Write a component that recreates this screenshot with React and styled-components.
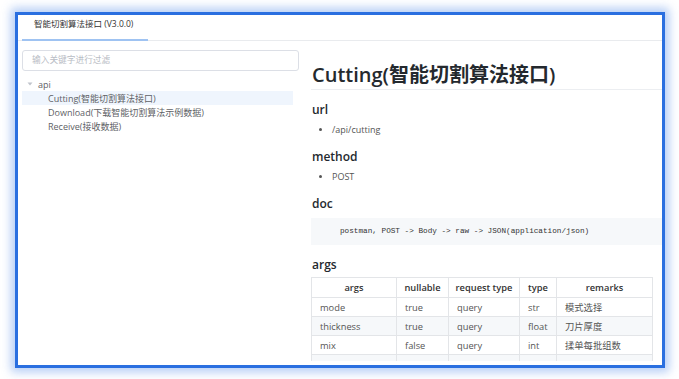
import React from "react";
import styled, { createGlobalStyle } from "styled-components";

const Global = createGlobalStyle`
  html, body { margin: 0; padding: 0; background: #fff; }
  body { font-family: "Open Sans", "Noto Sans CJK SC", sans-serif; }
`;

const Page = styled.div`
  width: 679px;
  height: 379px;
  padding: 12px 14px 11px 15px;
  box-sizing: border-box;
`;

const Frame = styled.div`
  width: 650px;
  height: 356px;
  box-sizing: border-box;
  border: 3px solid #2a6fe0;
  box-shadow: 0 0 9px 4px rgba(70, 130, 230, 0.4);
  background: #fff;
  display: flex;
  flex-direction: column;
  overflow: hidden;
`;

const Header = styled.div`
  height: 25px;
  flex: none;
  border-bottom: 1px solid #e9ebee;
  padding-left: 4px;
  display: flex;
`;

const Tab = styled.div`
  width: 126px;
  padding-left: 12px;
  box-sizing: border-box;
  font-size: 8.5px;
  color: #333;
  line-height: 18px;
  border-bottom: 2px solid #9fc3f2;
  margin-bottom: -1px;
`;

const Body = styled.div`
  flex: 1;
  min-height: 0;
  display: flex;
  gap: 12px;
  padding: 0 0 4px 4px;
`;

const Side = styled.div`
  width: 277px;
  flex: none;
  padding-top: 9px;
`;

const Search = styled.div`
  height: 21px;
  box-sizing: border-box;
  border: 1px solid #dcdfe6;
  border-radius: 3px;
  padding-left: 9px;
  font-size: 8.7px;
  line-height: 19px;
  color: #b8bcc4;
`;

const Tree = styled.div`
  width: 271px;
  margin-top: 6px;
`;

const Node = styled.div`
  height: 14px;
  display: flex;
  align-items: center;
  padding-left: ${p => p.$indent}px;
  font-size: 9px;
  color: #606266;
  background: ${p => (p.$active ? "#eff5fd" : "transparent")};
`;

const Caret = styled.svg`
  width: 6px;
  height: 6px;
  margin-right: 5px;
`;

const Main = styled.div`
  flex: 1;
  min-width: 0;
  overflow: hidden;
  padding-top: 21px;
  color: #333;
`;

const Title = styled.h1`
  margin: 0;
  font-size: 20px;
  font-weight: 600;
  line-height: 26px;
  color: #24292e;
  padding-left: 1px;
  padding-bottom: 1px;
  border-bottom: 1px solid #eceef1;
`;

const H3 = styled.h3`
  margin: 11px 0 0 1px;
  font-size: 12px;
  font-weight: 600;
  line-height: 18px;
  color: #24292e;
`;

const List = styled.ul`
  margin: 4px 0 0;
  padding-left: 21px;
  font-size: 9px;
  line-height: 14px;
  color: #555;
  li::marker { font-size: 8px; }
`;

const Code = styled.pre`
  margin: 5px 0 0;
  height: 27px;
  box-sizing: border-box;
  background: #f6f8fa;
  padding-left: 29px;
  font-family: "Liberation Mono", "DejaVu Sans Mono", monospace;
  font-size: 7.7px;
  line-height: 27px;
  color: #333;
`;

const Table = styled.table`
  margin-top: 3px;
  border-collapse: collapse;
  table-layout: fixed;
  font-size: 9.3px;
  color: #555;
`;

const Th = styled.th`
  height: 19px;
  padding: 0;
  border: 1px solid #e3e5e8;
  font-weight: 600;
  color: #333;
  text-align: center;
  white-space: nowrap;
`;

const Row = styled.tr`
  height: 19px;
  background: ${p => (p.$striped ? "#f6f8fa" : "#fff")};
`;

const Td = styled.td`
  padding: 0 8px;
  border: 1px solid #e3e5e8;
  white-space: nowrap;
`;

const cols = [
  ["args", 85],
  ["nullable", 52],
  ["request type", 71],
  ["type", 37],
  ["remarks", 96],
];

const rows = [
  ["mode", "true", "query", "str", "模式选择"],
  ["thickness", "true", "query", "float", "刀片厚度"],
  ["mix", "false", "query", "int", "揉单每批组数"],
  ["", "", "", "", ""],
];

export default function App() {
  return (
    <>
      <Global />
      <Page>
        <Frame>
          <Header>
            <Tab>智能切割算法接口 (V3.0.0)</Tab>
          </Header>
          <Body>
            <Side>
              <Search>输入关键字进行过滤</Search>
              <Tree>
                <Node $indent={5}>
                  <Caret viewBox="0 0 6 6">
                    <polygon points="0.5,1.5 5.5,1.5 3,4.5" fill="#c0c4cc" />
                  </Caret>
                  api
                </Node>
                <Node $indent={26} $active>Cutting(智能切割算法接口)</Node>
                <Node $indent={26}>Download(下载智能切割算法示例数据)</Node>
                <Node $indent={26}>Receive(接收数据)</Node>
              </Tree>
            </Side>
            <Main>
              <Title>Cutting(智能切割算法接口)</Title>
              <H3>url</H3>
              <List><li>/api/cutting</li></List>
              <H3>method</H3>
              <List><li>POST</li></List>
              <H3>doc</H3>
              <Code>postman, POST -&gt; Body -&gt; raw -&gt; JSON(application/json)</Code>
              <H3>args</H3>
              <Table>
                <colgroup>
                  {cols.map(([c, w]) => <col key={c} style={{ width: w }} />)}
                </colgroup>
                <thead>
                  <tr>
                    {cols.map(([c]) => <Th key={c}>{c}</Th>)}
                  </tr>
                </thead>
                <tbody>
                  {rows.map((r, i) => (
                    <Row key={i} $striped={i % 2 === 1}>
                      {r.map((v, j) => <Td key={j}>{v}</Td>)}
                    </Row>
                  ))}
                </tbody>
              </Table>
            </Main>
          </Body>
        </Frame>
      </Page>
    </>
  );
}
